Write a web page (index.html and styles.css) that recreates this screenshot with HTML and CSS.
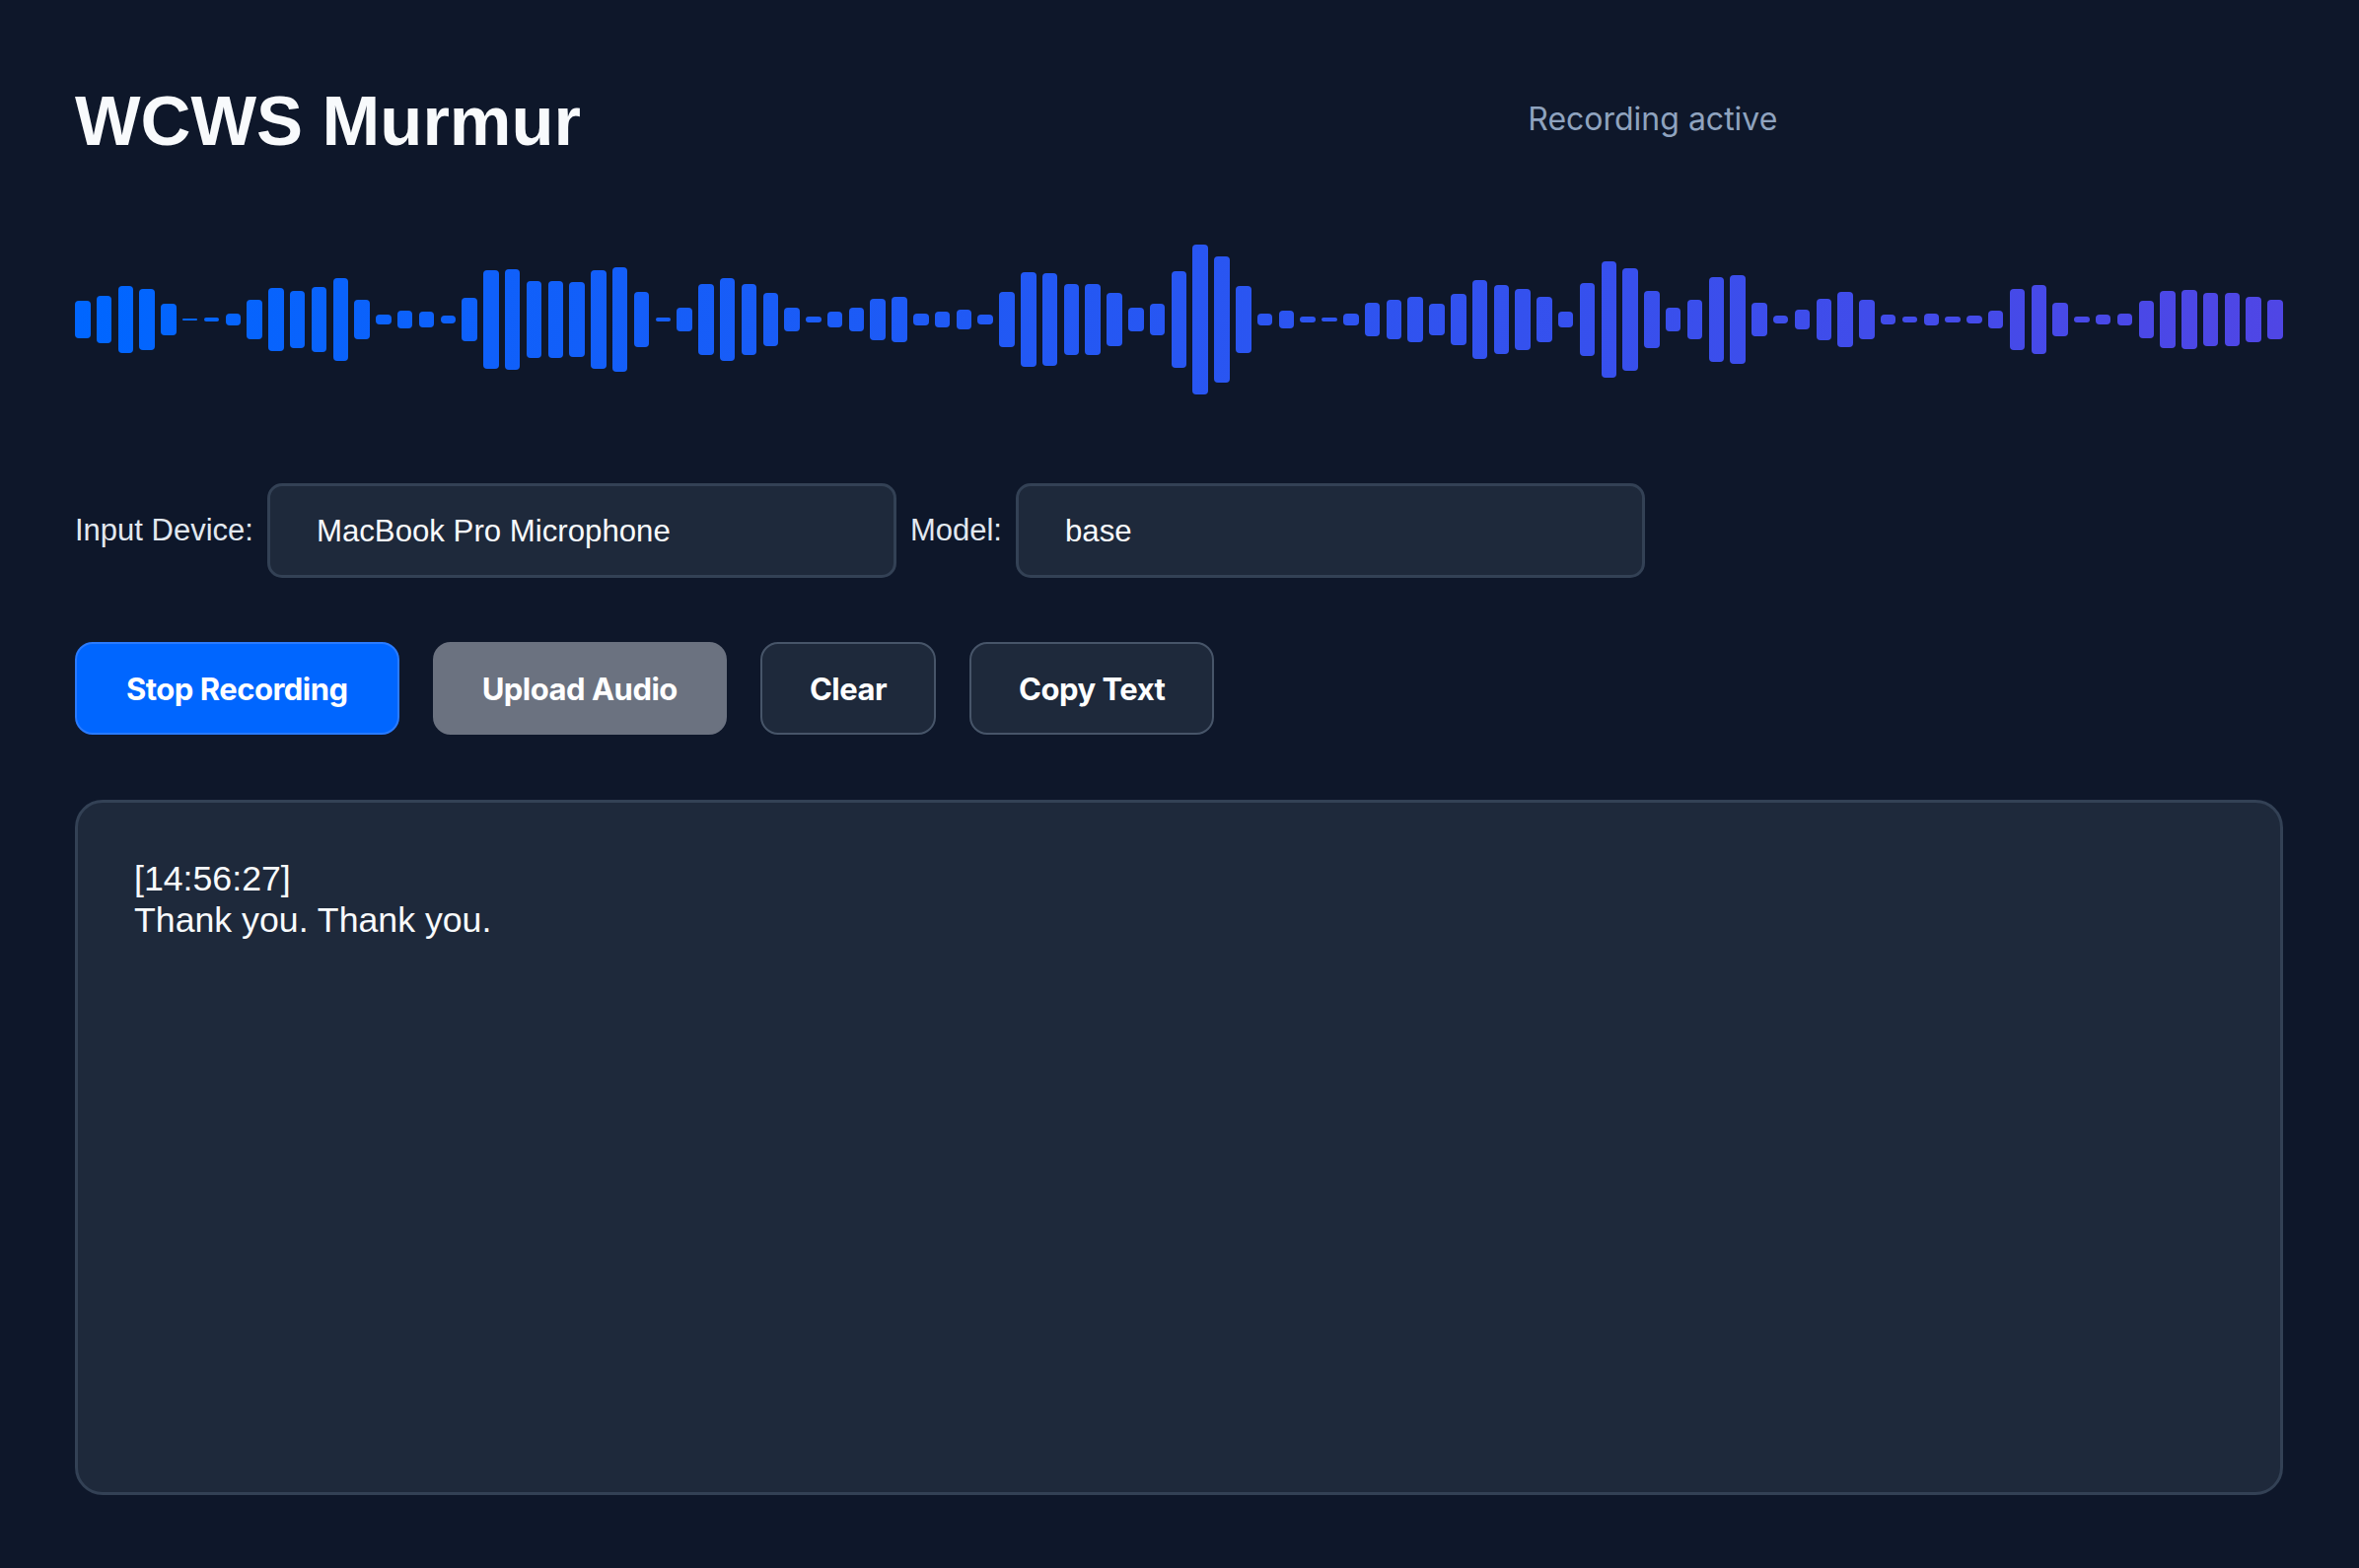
FILE: index.html
```html
<!DOCTYPE html>
<html lang="en">
<head>
<meta charset="utf-8">
<title>WCWS Murmur</title>
<link rel="stylesheet" href="styles.css">
</head>
<body>
<div class="app">
  <header class="header">
    <h1 class="title">WCWS Murmur</h1>
    <div class="status">Recording active</div>
  </header>

  <div class="wave">
    <span class="bar" style="height:37.7px"></span>
    <span class="bar" style="height:47.7px"></span>
    <span class="bar" style="height:67.7px"></span>
    <span class="bar" style="height:61.7px"></span>
    <span class="bar" style="height:31.7px"></span>
    <span class="bar" style="height:2px"></span>
    <span class="bar" style="height:3.7px"></span>
    <span class="bar" style="height:11.7px"></span>
    <span class="bar" style="height:39.7px"></span>
    <span class="bar" style="height:63.7px"></span>
    <span class="bar" style="height:57.7px"></span>
    <span class="bar" style="height:65.7px"></span>
    <span class="bar" style="height:83.7px"></span>
    <span class="bar" style="height:39.7px"></span>
    <span class="bar" style="height:9.7px"></span>
    <span class="bar" style="height:17.7px"></span>
    <span class="bar" style="height:15.7px"></span>
    <span class="bar" style="height:7.7px"></span>
    <span class="bar" style="height:43.7px"></span>
    <span class="bar" style="height:99.7px"></span>
    <span class="bar" style="height:101.7px"></span>
    <span class="bar" style="height:77.7px"></span>
    <span class="bar" style="height:77.7px"></span>
    <span class="bar" style="height:75.7px"></span>
    <span class="bar" style="height:99.7px"></span>
    <span class="bar" style="height:105.7px"></span>
    <span class="bar" style="height:55.7px"></span>
    <span class="bar" style="height:3.7px"></span>
    <span class="bar" style="height:23.7px"></span>
    <span class="bar" style="height:71.7px"></span>
    <span class="bar" style="height:83.7px"></span>
    <span class="bar" style="height:71.7px"></span>
    <span class="bar" style="height:53.7px"></span>
    <span class="bar" style="height:23.7px"></span>
    <span class="bar" style="height:5.7px"></span>
    <span class="bar" style="height:15.7px"></span>
    <span class="bar" style="height:23.7px"></span>
    <span class="bar" style="height:41.7px"></span>
    <span class="bar" style="height:45.7px"></span>
    <span class="bar" style="height:11.7px"></span>
    <span class="bar" style="height:15.7px"></span>
    <span class="bar" style="height:19.7px"></span>
    <span class="bar" style="height:9.7px"></span>
    <span class="bar" style="height:55.7px"></span>
    <span class="bar" style="height:95.7px"></span>
    <span class="bar" style="height:93.7px"></span>
    <span class="bar" style="height:71.7px"></span>
    <span class="bar" style="height:71.7px"></span>
    <span class="bar" style="height:53.7px"></span>
    <span class="bar" style="height:23.7px"></span>
    <span class="bar" style="height:31.7px"></span>
    <span class="bar" style="height:97.7px"></span>
    <span class="bar" style="height:151.7px"></span>
    <span class="bar" style="height:127.7px"></span>
    <span class="bar" style="height:67.7px"></span>
    <span class="bar" style="height:11.7px"></span>
    <span class="bar" style="height:17.7px"></span>
    <span class="bar" style="height:5.7px"></span>
    <span class="bar" style="height:3.7px"></span>
    <span class="bar" style="height:11.7px"></span>
    <span class="bar" style="height:33.7px"></span>
    <span class="bar" style="height:39.7px"></span>
    <span class="bar" style="height:45.7px"></span>
    <span class="bar" style="height:31.7px"></span>
    <span class="bar" style="height:51.7px"></span>
    <span class="bar" style="height:79.7px"></span>
    <span class="bar" style="height:69.7px"></span>
    <span class="bar" style="height:61.7px"></span>
    <span class="bar" style="height:45.7px"></span>
    <span class="bar" style="height:15.7px"></span>
    <span class="bar" style="height:73.7px"></span>
    <span class="bar" style="height:117.7px"></span>
    <span class="bar" style="height:103.7px"></span>
    <span class="bar" style="height:57.7px"></span>
    <span class="bar" style="height:23.7px"></span>
    <span class="bar" style="height:39.7px"></span>
    <span class="bar" style="height:85.7px"></span>
    <span class="bar" style="height:89.7px"></span>
    <span class="bar" style="height:33.7px"></span>
    <span class="bar" style="height:7.7px"></span>
    <span class="bar" style="height:19.7px"></span>
    <span class="bar" style="height:41.7px"></span>
    <span class="bar" style="height:55.7px"></span>
    <span class="bar" style="height:39.7px"></span>
    <span class="bar" style="height:9.7px"></span>
    <span class="bar" style="height:5.7px"></span>
    <span class="bar" style="height:11.7px"></span>
    <span class="bar" style="height:5.7px"></span>
    <span class="bar" style="height:7.7px"></span>
    <span class="bar" style="height:17.7px"></span>
    <span class="bar" style="height:61.7px"></span>
    <span class="bar" style="height:69.7px"></span>
    <span class="bar" style="height:33.7px"></span>
    <span class="bar" style="height:5.7px"></span>
    <span class="bar" style="height:9.7px"></span>
    <span class="bar" style="height:11.7px"></span>
    <span class="bar" style="height:37.7px"></span>
    <span class="bar" style="height:57.7px"></span>
    <span class="bar" style="height:59.7px"></span>
    <span class="bar" style="height:53.7px"></span>
    <span class="bar" style="height:53.7px"></span>
    <span class="bar" style="height:45.7px"></span>
    <span class="bar" style="height:39.7px"></span>
  </div>

  <div class="controls">
    <label class="label" for="device">Input Device:</label>
    <select id="device" class="select"><option>MacBook Pro Microphone</option></select>
    <label class="label" for="model">Model:</label>
    <select id="model" class="select"><option>base</option></select>
  </div>

  <div class="buttons">
    <button class="btn btn-primary">Stop Recording</button>
    <button class="btn btn-secondary">Upload Audio</button>
    <button class="btn btn-outline">Clear</button>
    <button class="btn btn-outline">Copy Text</button>
  </div>

  <div class="transcript">
    <div class="entry">
      <div class="time">[14:56:27]</div>
      <div class="text">Thank you. Thank you.</div>
    </div>
  </div>
</div>
</body>
</html>
```

FILE: styles.css
```css
* {
  box-sizing: border-box;
}

html, body {
  margin: 0;
  padding: 0;
  background: #0e172a;
}

body {
  font-family: "Liberation Sans", Arial, sans-serif;
  color: #f1f5f9;
}

.app {
  padding: 81px 77px 0 76px;
  height: 1590px;
}

/* Header */
.header {
  display: flex;
  align-items: flex-start;
  height: 84px;
}

.title {
  flex: 0 0 65.8%;
  margin: 0;
  font-family: "Liberation Sans", Arial, sans-serif;
  font-weight: 700;
  font-size: 70.5px;
  line-height: 84px;
  color: #f8fafc;
}

.status {
  margin-top: 20px;
  font-family: Inter, "Noto Sans", sans-serif;
  font-size: 32px;
  line-height: 40px;
  color: #8fa3bf;
}

/* Waveform */
.wave {
  margin-top: 79px;
  height: 160px;
  display: flex;
  align-items: center;
  justify-content: space-between;
}

.bar {
  display: block;
  width: 15.5px;
  min-height: 2px;
  border-radius: 4px;
  background: linear-gradient(to right, #0066ff 76px, #4f46e5 2313px) fixed;
}

/* Selects */
.controls {
  margin-top: 86px;
  display: flex;
  align-items: center;
  gap: 14px;
}

.label {
  font-size: 31px;
  color: #e2e8f0;
}

.select {
  appearance: none;
  -webkit-appearance: none;
  width: 638px;
  height: 96px;
  padding: 0 47px;
  border: 3px solid #334155;
  border-radius: 15px;
  background: #1e293b;
  color: #f8fafc;
  font-family: "Liberation Sans", Arial, sans-serif;
  font-size: 31.2px;
  outline: none;
}

/* Buttons */
.buttons {
  margin-top: 65px;
  display: flex;
  gap: 34px;
}

.btn {
  height: 94px;
  padding: 0 48px;
  border: 2px solid transparent;
  border-radius: 18px;
  font-family: Inter, "Noto Sans", sans-serif;
  font-weight: 700;
  font-size: 31px;
  letter-spacing: -0.5px;
  color: #ffffff;
  cursor: pointer;
}

.btn-primary {
  padding: 0 50px;
  background: #0066ff;
  border-color: #2a7bff;
}

.btn-secondary {
  background: #6b7280;
  border-color: #6b7280;
}

.btn-outline {
  background: #1e293b;
  border-color: #475569;
}

/* Transcript */
.transcript {
  margin-top: 66px;
  height: 705px;
  padding: 56px 57px;
  border: 3px solid #334155;
  border-radius: 28px;
  background: #1e293b;
  font-size: 35.7px;
  line-height: 42px;
  color: #f8fafc;
}
```
